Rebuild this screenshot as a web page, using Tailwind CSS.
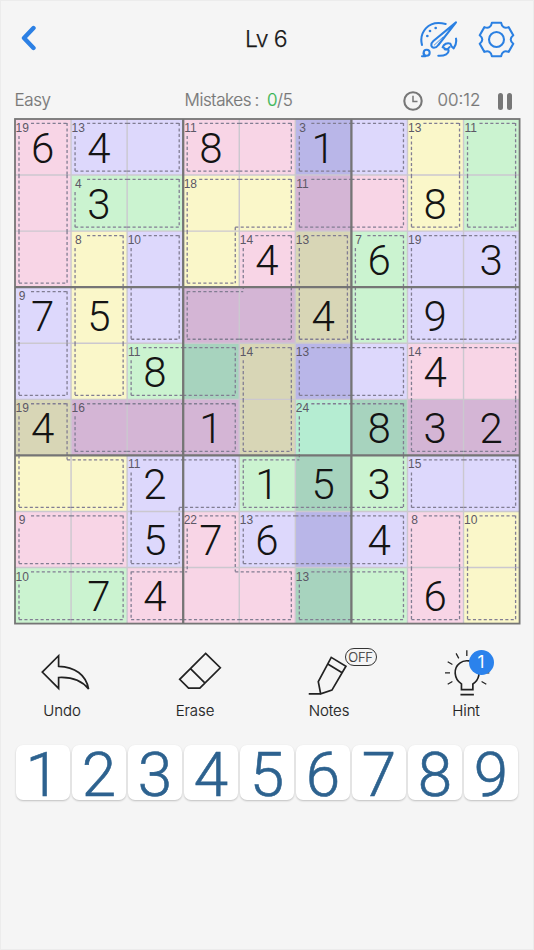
<!DOCTYPE html>
<html lang="en">
<head>
<meta charset="utf-8">
<title>Killer Sudoku</title>
<script src="https://cdn.jsdelivr.net/npm/@tailwindcss/browser@4"></script>
</head>
<body class="bg-[#f5f5f5]">
<main class="w-[534px] h-[950px] overflow-hidden border border-[#ececec] bg-[#f5f5f5] font-['Inter','Liberation_Sans',sans-serif] text-[#222]">
  <header class="h-[76px] pl-[19px] pr-[18px] grid grid-cols-[1fr_60px_1fr] items-center">
    <svg class="w-[18px] h-[26px] -mt-[2px]" viewBox="0 0 18 26" fill="none" stroke="#2c80e4" stroke-width="4.4" stroke-linecap="round" stroke-linejoin="round"><path d="M13.5 3 L4 13 L13.5 23"/></svg>
    <h1 class="-ml-[3px] text-center text-[23px] font-light tracking-[-0.6px] text-[#181818] whitespace-nowrap [-webkit-text-stroke:0.25px_#181818]">Lv 6</h1>
    <div class="flex justify-end items-center gap-[20px]">
      <svg class="w-[39px] h-[38px]" viewBox="54 29 117 114" fill="none" stroke="#2b80e2" stroke-width="6.2" stroke-linecap="round" stroke-linejoin="round">
        <path d="M63 104 C54 69 79 27 134 41"/>
        <path d="M165 36 L97 92 C87 101 90 112 99 112 C105 112 108 110 112 104 Z"/>
        <path d="M126 80 L100 104" stroke-width="2.5"/>
        <path d="M165 85 C167 96 164 106 158 114 C153 111 150 107 148 100 C139 96 128 101 125 111 C130 112 133 118 142 118 C146 130 131 137 112 136"/>
        <path d="M131 117 C138 119 142 116 146 110"/>
        <circle cx="77" cy="127" r="9"/><path d="M63 138 H73 C69 137 68 133 68 129"/>
        <g fill="#2b80e2" stroke="none"><circle cx="79" cy="77" r="4"/><circle cx="87" cy="62" r="4"/><circle cx="104" cy="53" r="4"/></g>
      </svg>
      <svg class="w-[37px] h-[37px]" viewBox="-55.5 -55.5 111 111" fill="none" stroke="#2b80e2" stroke-width="6.2" stroke-linejoin="round">
        <path d="M-14 -50 H14 C16 -37 24 -32.5 36.3 -37.1 L50.3 -12.9 C40 -4.6 40.1 4.5 50.3 12.9 L36.3 37.1 C24 32.5 16 37 14 50 H-14 C-16 37 -24 32.5 -36.3 37.1 L-50.3 12.9 C-40 4.6 -40.1 -4.5 -50.3 -12.9 L-36.3 -37.1 C-24 -32.5 -16 -37 -14 -50 Z"/>
        <circle r="22.5"/>
      </svg>
    </div>
  </header>

  <section class="mt-[11px] h-[26px] pl-[13.5px] pr-[21.5px] flex items-center text-[17px] font-light text-[#777] [-webkit-text-stroke:0.2px_#777]">
    <span class="w-[170px] tracking-[-0.4px]">Easy</span>
    <span class="w-[218px] tracking-[-0.4px]">Mistakes<span class="ml-[3.5px] mr-[8px]">:</span><span class="text-[#35b452] [-webkit-text-stroke:0.2px_#35b452]">0</span>/5</span>
    <svg class="w-[20px] h-[20px]" viewBox="0 0 20 20" fill="none" stroke="#777" stroke-width="2.1"><circle cx="10" cy="10" r="8.7"/><path d="M10 4.7 V10.5 H14.5" stroke-width="1.5"/></svg>
    <span class="ml-[15px] w-[46px] whitespace-nowrap">00:12</span>
    <span class="ml-auto flex gap-[4.5px]"><i class="w-[4.5px] h-[17px] rounded-full bg-[#777]"></i><i class="w-[4.5px] h-[17px] rounded-full bg-[#777]"></i></span>
  </section>

  <section class="relative ml-[13.7px] mt-[5px] w-[504.6px] h-[504.6px]">
    <div id="board" class="grid grid-cols-9 grid-rows-9 w-full h-full font-['Roboto','Liberation_Sans',sans-serif] font-light text-[42px] leading-none text-[#141414]"></div>
    <svg id="lines" class="absolute inset-0 w-full h-full overflow-visible" viewBox="0 0 505 505" fill="none"></svg>
  </section>

  <section class="mt-[24px] h-[74px] relative flex text-[15px] font-light tracking-[-0.1px] [-webkit-text-stroke:0.15px_#222]">
    <button class="w-[122px] flex flex-col items-center">
      <svg class="w-[50.5px] h-[47px] mt-[5px] ml-[9px]" viewBox="119 56 147 138" fill="none" stroke="#222" stroke-width="5"><path d="M125 112 L173 64 V95 C220 96 254 120 261 162 C240 135 210 126 173 128 V160 Z"/></svg>
    </button>
    <button class="w-[147px] flex flex-col items-center">
      <svg class="w-[44px] h-[41px] mt-[3px] ml-[14px]" viewBox="524 50 129 120" fill="none" stroke="#222" stroke-width="5"><path d="M605 57 L648 99 L588 159 H555 L529 133 Z M562 103 L604 145"/></svg>
    </button>
    <button class="w-[120px] flex flex-col items-center">
      <svg class="w-[41px] h-[43px] mt-[7px] ml-[8px]" viewBox="903 60 120 126" fill="none" stroke="#222" stroke-width="5"><path d="M974 67 L1017 93 L976 163 L943 174 L936 138 Z M965 87 L1006 112 M908 174 H943"/></svg>
    </button>
    <button class="w-[153px] flex flex-col items-center">
      <svg class="w-[47px] h-[48px] mt-[1px] ml-[19px]" viewBox="1303 44 140 143" fill="none" stroke="#222" stroke-width="5"><path d="M1355 165 V148 C1332 133 1330 101 1350 86 C1365 74 1390 78 1400 93 C1413 112 1408 137 1389 148 V165 Z M1352 180 H1392"/><path stroke-width="3.8" d="M1371 48 V65 M1339 57 L1347 72 M1314 82 L1328 90 M1306 115 H1321 M1314 149 L1328 141 M1429 149 L1415 141 M1422 115 H1438"/></svg>
    </button>
    <span class="absolute left-[343.5px] top-[0px] w-[32px] h-[18.5px] border-[1.5px] border-[#333] rounded-full text-[13px] leading-[16px] flex justify-center tracking-[-0.3px] text-[#444]">OFF</span>
    <span class="absolute left-[467.5px] top-[2px] w-[25px] h-[25px] rounded-full bg-[#2b82ec] text-white text-center text-[17px] leading-[25px] font-normal [-webkit-text-stroke:0]">1</span>
    <span class="absolute left-[21px] w-[80px] top-[52px] text-center">Undo</span>
    <span class="absolute left-[154px] w-[80px] top-[52px] text-center">Erase</span>
    <span class="absolute left-[288px] w-[80px] top-[52px] text-center">Notes</span>
    <span class="absolute left-[425px] w-[80px] top-[52px] text-center">Hint</span>
  </section>

  <nav id="pad" class="mt-[23.5px] ml-[15px] grid grid-cols-9 grid-rows-[54.5px] gap-x-[2.4px] w-[501.8px] h-[54.5px] font-['Roboto','Liberation_Sans',sans-serif] font-light text-[62px] leading-[54px] text-[#2d628f] [-webkit-text-stroke:0.6px_#2d628f]"></nav>
</main>
<script>
  // One letter per cage, one character per cell.
  const cages = ['ABBCCDDEF','AGGHHIIEF','AJKHLMNOO','PJKLLMNOO','PJQQRSSTT','UVVVRWWTT','UUXXWWWZZ','aaXbcccde','ffbbbggde'];
  const sums = {A:19,B:13,C:11,D:3,E:13,F:11,G:4,H:18,I:11,J:8,K:10,L:14,M:13,N:7,O:19,P:9,Q:11,R:14,S:13,T:14,U:19,V:16,W:24,X:11,Z:15,a:9,b:22,c:13,d:8,e:10,f:10,g:13};
  const given = ['64.8.1...','.3.....8.','....4.6.3','75...4.9.','..8....4.','4..1..832','..2.153..','..576.4..','.74....6.'];
  const tone = {};
  'ACILTVabd'.split('').forEach(k => tone[k] = 'pink');
  'BDKOPSXZc'.split('').forEach(k => tone[k] = 'lav');
  'FGNQWfg'.split('').forEach(k => tone[k] = 'green');
  'EHJMRUe'.split('').forEach(k => tone[k] = 'yellow');
  const normal = {pink:'bg-[#f8d5e6]', lav:'bg-[#ddd8fc]', green:'bg-[#cbf3d0]', yellow:'bg-[#faf7c9]'};
  const dim = {pink:'bg-[#d4b5d5]', lav:'bg-[#b9b6e8]', green:'bg-[#a7d3be]', yellow:'bg-[#d8d6b6]'};
  const S = 505 / 9, I = 4, at = (r, c) => (cages[r] || '')[c];
  const board = document.getElementById('board');
  let dash = '', seen = {}, thin = '', thick = '';
  for (let r = 0; r < 9; r++) for (let c = 0; c < 9; c++) {
    const k = at(r, c), first = !seen[k]; seen[k] = 1;
    const lit = r === 5 || c === 5 || (r > 2 && r < 6 && c > 2 && c < 6);
    const bg = r === 5 && c === 5 ? 'bg-[#b5edd2]' : (lit ? dim : normal)[tone[k]];
    const d = given[r][c];
    const label = first ? `<span class="absolute left-0 top-[3px] w-[15px] text-center text-[12px] leading-[12px] font-normal font-['Liberation_Sans',sans-serif] text-[#5c5866]">${sums[k]}</span>` : '';
    board.insertAdjacentHTML('beforeend', `<div class="relative pt-[3px] flex items-center justify-center ${bg}">${label}${d === '.' ? '' : d}</div>`);
    const x0 = c * S, y0 = r * S, x1 = x0 + S, y1 = y0 + S;
    const same = (dr, dc) => at(r + dr, c + dc) === k;
    const L = same(0,-1), R = same(0,1), T = same(-1,0), B = same(1,0);
    const end = (side, diag) => !side ? I : diag ? -I : 0;
    if (!T) dash += `M${first ? x0 + 16 : x0 + end(L, same(-1,-1))} ${y0 + I + .4}H${x1 - end(R, same(-1,1))}`;
    if (!B) dash += `M${x0 + end(L, same(1,-1))} ${y1 - I}H${x1 - end(R, same(1,1))}`;
    if (!L) dash += `M${x0 + I} ${first ? y0 + 17 : y0 + end(T, same(-1,-1))}V${y1 - end(B, same(1,-1))}`;
    if (!R) dash += `M${x1 - I} ${y0 + end(T, same(-1,1))}V${y1 - end(B, same(1,1))}`;
  }
  for (let i = 1; i < 9; i++) {
    const p = `M${i * S} 0V505M0 ${i * S}H505`;
    if (i % 3) thin += p; else thick += p;
  }
  document.getElementById('lines').innerHTML =
    `<path d="${thin}" stroke="#cbc8cf" stroke-width="1.4"/><path d="${dash}" stroke="#817d92" stroke-width="1.3" stroke-dasharray="3.1 2.3"/><path d="${thick}" stroke="#757575" stroke-width="2.3"/><rect width="505" height="505" stroke="#757575" stroke-width="1.8"/>`;
  const pad = document.getElementById('pad');
  for (let n = 1; n < 10; n++)
    pad.insertAdjacentHTML('beforeend', `<button class="bg-white rounded-[7px] shadow-[0_1px_2px_rgba(0,0,0,0.22)] flex items-center justify-center pt-[6px]">${n}</button>`);
</script>
</body>
</html>
